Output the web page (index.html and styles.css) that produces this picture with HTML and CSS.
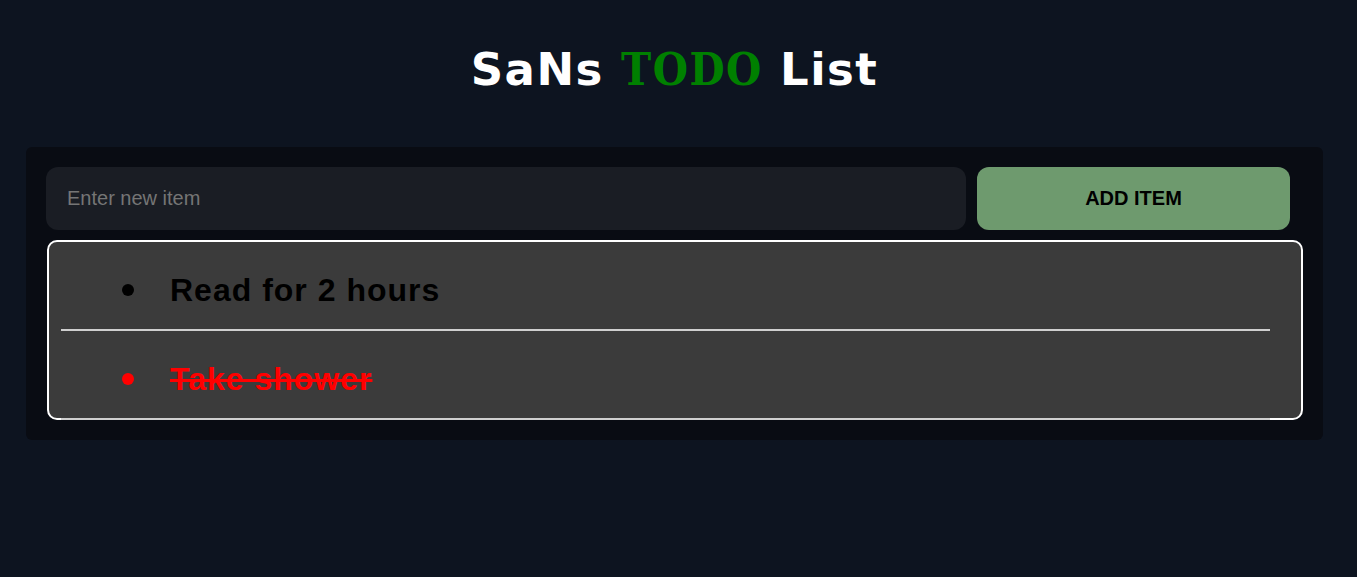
FILE: index.html
```html
<!DOCTYPE html>
<html>
<head>
<meta charset="utf-8">
<link rel="stylesheet" href="styles.css">
</head>
<body>
<h1 class="title">SaNs <span class="todo">TODO</span> List</h1>
<div class="wrap">
  <div class="panel">
    <div class="entry">
      <input class="field" type="text" placeholder="Enter new item">
      <button class="add">ADD ITEM</button>
    </div>
    <ul class="items">
      <li class="item">Read for 2 hours</li>
      <li class="item done">Take shower</li>
    </ul>
  </div>
</div>
</body>
</html>
```
FILE: styles.css
```css
html, body {
  margin: 0;
  padding: 0;
  background: #0d1420;
  height: 100%;
}
body {
  font-family: "Liberation Sans", Arial, sans-serif;
}
.title {
  margin: 0;
  padding: 44px 8px 0 0;
  height: 103px;
  box-sizing: border-box;
  text-align: center;
  font-family: "DejaVu Sans", Verdana, sans-serif;
  font-weight: bold;
  font-size: 45px;
  line-height: 52px;
  letter-spacing: 1.5px;
  color: #ffffff;
}
.todo {
  font-family: "DejaVu Serif Condensed", "DejaVu Serif", serif;
  font-stretch: condensed;
  color: #008000;
}
.wrap {
  padding: 44px 34px 0 26px;
}
.panel {
  background: #090c13;
  border-radius: 6px;
  padding: 20px;
}
.entry {
  display: flex;
  gap: 11px;
  margin-right: 13px;
}
.field {
  flex: 1;
  height: 63px;
  box-sizing: border-box;
  border: none;
  outline: none;
  border-radius: 12px;
  background: #1a1d24;
  padding: 0 21px;
  font-family: "Liberation Sans", Arial, sans-serif;
  font-size: 20px;
  color: #ddd;
}
.field::placeholder {
  color: #757575;
}
.add {
  width: 313px;
  height: 63px;
  border: none;
  border-radius: 12px;
  background: #6e9a6e;
  font-family: "Liberation Sans", Arial, sans-serif;
  font-weight: bold;
  font-size: 20px;
  color: #000;
}
.items {
  list-style: none;
  margin: 10px 0 0 1px;
  padding: 0 31px 0 12px;
  background: #3b3b3b;
  border: 2px solid #ffffff;
  border-radius: 10px;
}
.item {
  display: flex;
  align-items: center;
  height: 78px;
  padding-top: 9px;
  padding-left: 61px;
  border-bottom: 2px solid #cfcfcf;
  font-size: 32px;
  font-weight: bold;
  letter-spacing: 1px;
  color: #000;
}
.item::before {
  content: "";
  width: 12px;
  height: 12px;
  border-radius: 50%;
  background: currentColor;
  margin-right: 36px;
}
.item:last-child {
  margin-bottom: -2px;
}
.done {
  color: #ff0000;
  text-decoration: line-through;
}
```
